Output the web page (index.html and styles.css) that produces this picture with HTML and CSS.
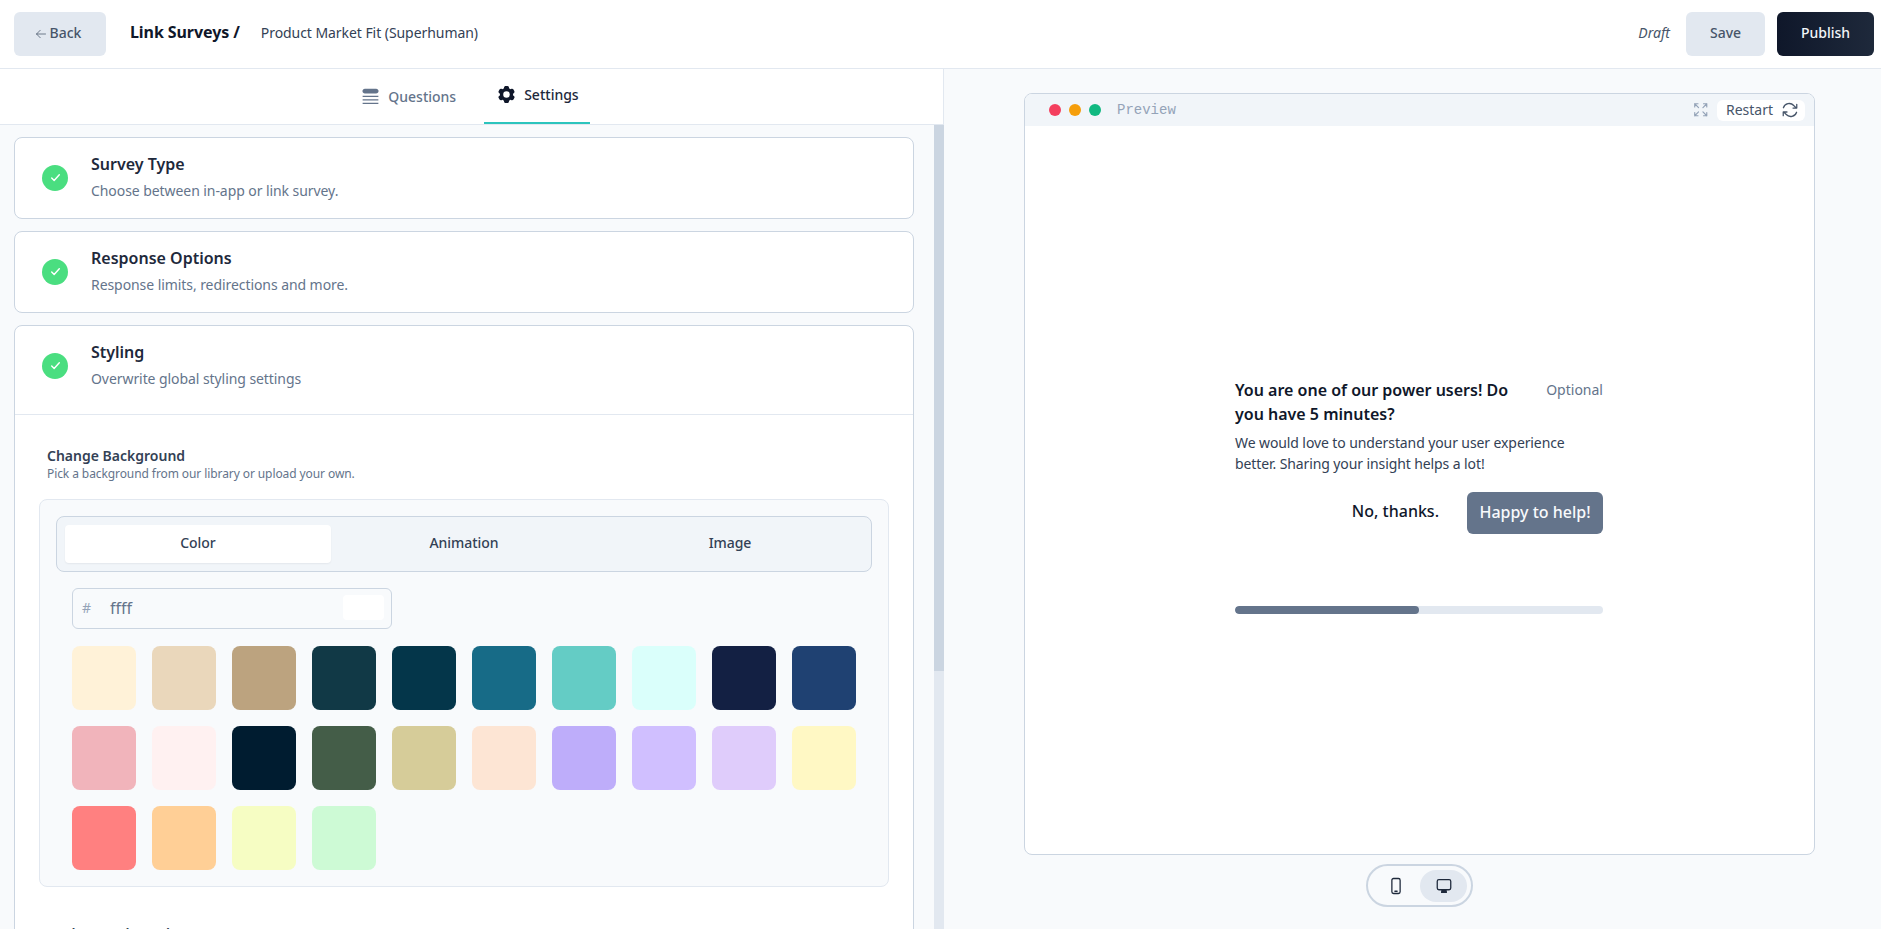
FILE: index.html
```html
<!DOCTYPE html>
<html lang="en">
<head>
<meta charset="utf-8">
<title>Link Surveys</title>
<link rel="stylesheet" href="styles.css">
</head>
<body>
<header class="topbar">
  <div class="topbar-left">
    <button class="btn btn-soft btn-back">
      <svg class="back-arrow" viewBox="0 0 24 24" fill="none" stroke="currentColor" stroke-width="1.5" stroke-linecap="round" stroke-linejoin="round"><path d="M10.5 19.5 3 12l7.5-7.5M3 12h18"/></svg>
      Back
    </button>
    <span class="crumb">Link Surveys /</span>
    <span class="survey-name">Product Market Fit (Superhuman)</span>
  </div>
  <div class="topbar-right">
    <span class="status">Draft</span>
    <button class="btn btn-soft btn-save">Save</button>
    <button class="btn btn-dark">Publish</button>
  </div>
</header>
<main class="workspace">
  <section class="editor">
    <nav class="tabs">
      <a class="tab">
        <svg class="tab-icon" viewBox="0 0 24 24" fill="currentColor"><path d="M5.6 3h12.8C20 3 21.2 4.2 21.2 5.8S20 8.6 18.4 8.6H5.6C4 8.6 2.8 7.4 2.8 5.8S4 3 5.6 3Z"/><path d="M3 11h18v1.6H3zM3 15h18v1.6H3zM3 19h18v1.6H3z"/></svg>
        Questions
      </a>
      <a class="tab tab-active">
        <svg class="tab-icon" viewBox="0 0 24 24" fill="currentColor"><path fill-rule="evenodd" d="M11.08 2.25c-.92 0-1.7.66-1.85 1.57l-.18 1.07c-.02.12-.11.26-.3.35-.34.17-.67.36-.98.57-.17.12-.33.13-.45.08l-1.01-.38a1.88 1.88 0 0 0-2.28.82l-.92 1.6a1.88 1.88 0 0 0 .43 2.38l.83.69c.1.08.17.22.15.43a8 8 0 0 0 0 1.14c.02.2-.05.35-.15.43l-.83.69a1.88 1.88 0 0 0-.43 2.38l.92 1.6c.46.79 1.42 1.14 2.28.82l1.01-.38c.12-.05.28-.04.45.08.31.21.64.4.98.57.19.09.28.23.3.35l.18 1.07c.15.91.93 1.57 1.85 1.57h1.84c.92 0 1.7-.66 1.85-1.57l.18-1.07c.02-.12.11-.26.3-.35.34-.17.67-.36.98-.57.17-.12.33-.13.45-.08l1.01.38c.86.32 1.82-.03 2.28-.82l.92-1.6a1.88 1.88 0 0 0-.43-2.38l-.83-.69c-.1-.08-.17-.22-.15-.43a8 8 0 0 0 0-1.14c-.02-.2.05-.35.15-.43l.83-.69c.71-.58.9-1.59.43-2.38l-.92-1.6a1.88 1.88 0 0 0-2.28-.82l-1.01.38c-.12.05-.28.04-.45-.08a8 8 0 0 0-.98-.57c-.19-.09-.28-.23-.3-.35l-.18-1.07a1.88 1.88 0 0 0-1.85-1.57h-1.84ZM12 15.75a3.75 3.75 0 1 0 0-7.5 3.75 3.75 0 0 0 0 7.5Z" clip-rule="evenodd"/></svg>
        Settings
      </a>
    </nav>
    <div class="editor-body">
      <div class="scroller">
        <article class="card">
          <div class="card-head">
            <span class="check"><svg viewBox="0 0 24 24" fill="none" stroke="currentColor" stroke-width="2.6" stroke-linecap="round" stroke-linejoin="round"><path d="m5 13 4.5 4.5L19 7"/></svg></span>
            <div>
              <h3 class="card-title">Survey Type</h3>
              <p class="card-sub">Choose between in-app or link survey.</p>
            </div>
          </div>
        </article>
        <article class="card">
          <div class="card-head">
            <span class="check"><svg viewBox="0 0 24 24" fill="none" stroke="currentColor" stroke-width="2.6" stroke-linecap="round" stroke-linejoin="round"><path d="m5 13 4.5 4.5L19 7"/></svg></span>
            <div>
              <h3 class="card-title">Response Options</h3>
              <p class="card-sub">Response limits, redirections and more.</p>
            </div>
          </div>
        </article>
        <article class="card">
          <div class="card-head card-head-open">
            <span class="check"><svg viewBox="0 0 24 24" fill="none" stroke="currentColor" stroke-width="2.6" stroke-linecap="round" stroke-linejoin="round"><path d="m5 13 4.5 4.5L19 7"/></svg></span>
            <div>
              <h3 class="card-title">Styling</h3>
              <p class="card-sub">Overwrite global styling settings</p>
            </div>
          </div>
          <div class="card-body">
            <h4 class="field-label">Change Background</h4>
            <p class="field-help">Pick a background from our library or upload your own.</p>
            <div class="bg-box">
              <div class="segmented">
                <span class="segment segment-active">Color</span>
                <span class="segment">Animation</span>
                <span class="segment">Image</span>
              </div>
              <div class="color-input">
                <span class="hash">#</span>
                <span class="hex">ffff</span>
                <span class="color-chip"></span>
              </div>
              <div class="swatches">
                <span class="swatch" style="background:#FFF2D8"></span>
                <span class="swatch" style="background:#EAD7BB"></span>
                <span class="swatch" style="background:#BCA37F"></span>
                <span class="swatch" style="background:#113946"></span>
                <span class="swatch" style="background:#04364A"></span>
                <span class="swatch" style="background:#176B87"></span>
                <span class="swatch" style="background:#64CCC5"></span>
                <span class="swatch" style="background:#DAFFFB"></span>
                <span class="swatch" style="background:#132043"></span>
                <span class="swatch" style="background:#1F4172"></span>
                <span class="swatch" style="background:#F1B4BB"></span>
                <span class="swatch" style="background:#FFF1F1"></span>
                <span class="swatch" style="background:#001C30"></span>
                <span class="swatch" style="background:#445D48"></span>
                <span class="swatch" style="background:#D6CC99"></span>
                <span class="swatch" style="background:#FDE5D4"></span>
                <span class="swatch" style="background:#BEADFA"></span>
                <span class="swatch" style="background:#D0BFFF"></span>
                <span class="swatch" style="background:#DFCCFB"></span>
                <span class="swatch" style="background:#FFF8C4"></span>
                <span class="swatch" style="background:#FF8080"></span>
                <span class="swatch" style="background:#FFCF96"></span>
                <span class="swatch" style="background:#F6FDC3"></span>
                <span class="swatch" style="background:#CDFAD5"></span>
              </div>
            </div>
            <h4 class="field-label field-label-next">Background Overlay</h4>
          </div>
        </article>
      </div>
      <div class="scrollbar"><div class="scrollbar-thumb"></div></div>
    </div>
  </section>
  <section class="preview">
    <div class="window">
      <div class="window-bar">
        <span class="dot dot-red"></span>
        <span class="dot dot-amber"></span>
        <span class="dot dot-green"></span>
        <span class="window-name">Preview</span>
        <svg class="expand" viewBox="0 0 24 24" fill="none" stroke="currentColor" stroke-width="1.6" stroke-linecap="round" stroke-linejoin="round"><path d="M3.75 8.25v-4.5h4.5M3.75 3.75 9 9M20.25 8.25v-4.5h-4.5M20.25 3.75 15 9M3.75 15.75v4.5h4.5M3.75 20.25 9 15M20.25 15.75v4.5h-4.5M20.25 20.25 15 15"/></svg>
        <span class="restart">
          Restart
          <svg class="restart-icon" viewBox="0 0 24 24" fill="none" stroke="currentColor" stroke-width="1.7" stroke-linecap="round" stroke-linejoin="round"><path d="M16.02 9.35h4.99V4.36M2.99 19.64v-4.99h4.99M3.2 9.02a8.25 8.25 0 0 1 13.8-3.08l3.18 3.18M20.8 14.98a8.25 8.25 0 0 1-13.8 3.08l-3.18-3.18"/></svg>
        </span>
      </div>
      <div class="window-body">
        <div class="question">
          <div class="question-head">
            <h2 class="question-title">You are one of our power users! Do you have 5 minutes?</h2>
            <span class="optional">Optional</span>
          </div>
          <p class="question-sub">We would love to understand your user experience better. Sharing your insight helps a lot!</p>
          <div class="question-actions">
            <span class="dismiss">No, thanks.</span>
            <span class="accept">Happy to help!</span>
          </div>
          <div class="progress"><div class="progress-fill"></div></div>
        </div>
      </div>
    </div>
    <div class="device-toggle">
      <span class="device">
        <svg viewBox="0 0 24 24" fill="none" stroke="currentColor" stroke-width="1.7" stroke-linecap="round" stroke-linejoin="round"><rect x="6.5" y="2" width="11" height="20" rx="2.2"/><path d="M10.5 19h3"/></svg>
      </span>
      <span class="device device-active">
        <svg viewBox="0 0 24 24" fill="none" stroke="currentColor" stroke-width="1.7" stroke-linecap="round" stroke-linejoin="round"><rect x="3" y="3.5" width="18" height="13.5" rx="2.2"/><path d="M9.5 17h5l.7 3.5H8.8z" fill="currentColor"/></svg>
      </span>
    </div>
  </section>
</main>
</body>
</html>
```
FILE: styles.css
```css
* { box-sizing: border-box; }
html, body { height: 100%; }
body {
  margin: 0;
  display: flex;
  flex-direction: column;
  overflow: hidden;
  background: #fff;
  color: #0f172a;
  font-family: "Noto Sans", "Liberation Sans", sans-serif;
  font-size: 14px;
}
h2, h3, h4, p { margin: 0; }

.topbar {
  flex: none;
  height: 69px;
  display: flex;
  align-items: center;
  justify-content: space-between;
  padding: 0 7px 1px 14px;
  border-bottom: 1px solid #e2e8f0;
  background: #fff;
}
.topbar-left, .topbar-right { display: flex; align-items: center; }
.btn {
  height: 44px;
  padding: 0 0 2px;
  border: 0;
  border-radius: 6px;
  font: 500 14px/20px "Noto Sans", sans-serif;
  display: inline-flex;
  align-items: center;
  justify-content: center;
}
.btn-soft { background: #e2e8f0; color: #475569; }
.btn-dark { background: #0f172a; color: #f1f5f9; width: 97px; margin-left: 12px; background-image: linear-gradient(90deg, #0f172a, #1e293b); }
.btn-back { width: 92px; gap: 3px; padding-right: 4px; }
.btn-save { width: 79px; }
.back-arrow { width: 12px; height: 12px; margin-top: 2px; }
.crumb { margin: 0 0 3px 24px; font-size: 16px; font-weight: 700; line-height: 24px; letter-spacing: -.08px; color: #0f172a; }
.survey-name { margin: 0 0 2px 21px; color: #334155; line-height: 20px; letter-spacing: -.06px; }
.status { margin: 0 16px 2px 0; font-style: italic; color: #475569; }

.workspace { flex: 1; min-height: 0; display: flex; }

.editor {
  flex: none;
  width: 944px;
  display: flex;
  flex-direction: column;
  min-height: 0;
}
.tabs {
  flex: none;
  height: 56px;
  display: flex;
  justify-content: center;
  padding-right: 7px;
  border-bottom: 1px solid #e2e8f0;
  border-right: 1px solid #e2e8f0;
  background: #fff;
}
.tab {
  display: flex;
  align-items: center;
  gap: 7px;
  height: 55px;
  padding: 0 14px;
  color: #64748b;
  font-weight: 500;
  margin-right: 14px;
}
.tab-active {
  margin-right: 0;
  padding: 0 11px 3px 12px;
  color: #1e293b;
  border-bottom: 2px solid #2cc4bd;
}
.tab-icon { width: 21px; height: 21px; flex: none; }
.tab-active .tab-icon { color: #0f172a; }

.editor-body { flex: 1; min-height: 0; display: flex; }
.scroller {
  flex: 1;
  min-width: 0;
  overflow: hidden;
  padding: 12px 20px 0 14px;
  background: #f8fafc;
}
.scrollbar { flex: none; width: 10px; background: #e2e8f0; }
.scrollbar-thumb { height: 546px; background: #cbd5e1; }

.card {
  margin-bottom: 12px;
  background: #fff;
  border: 1px solid #cbd5e1;
  border-radius: 8px;
}
.card-head {
  display: flex;
  align-items: center;
  gap: 23px;
  padding: 14px 27px 17px;
}
.card-head-open { padding-bottom: 25px; }
.check {
  flex: none;
  width: 26px;
  height: 26px;
  margin-top: 2px;
  border-radius: 50%;
  background: #4ade80;
  color: #fff;
  display: flex;
  align-items: center;
  justify-content: center;
}
.check svg { width: 13px; height: 13px; }
.card-title { font-size: 16px; line-height: 24px; font-weight: 600; color: #1e293b; }
.card-sub { margin-top: 5px; line-height: 20px; letter-spacing: -.07px; color: #64748b; }
.card-body { border-top: 1px solid #e2e8f0; padding: 31px 24px 24px; }
.field-label { padding-left: 8px; font-size: 14px; line-height: 20px; font-weight: 600; color: #334155; }
.field-help { padding-left: 8px; font-size: 12px; line-height: 16px; letter-spacing: -.09px; color: #64748b; }
.field-label-next { margin-top: 37px; }

.bg-box {
  margin-top: 17px;
  padding: 16px;
  background: #f8fafc;
  border: 1px solid #e2e8f0;
  border-radius: 8px;
}
.segmented {
  display: grid;
  grid-template-columns: repeat(3, 1fr);
  padding: 8px;
  background: #f1f5f9;
  border: 1px solid #cbd5e1;
  border-radius: 8px;
}
.segment { height: 38px; padding-bottom: 3px; display: flex; align-items: center; justify-content: center; font-weight: 500; letter-spacing: -.05px; color: #334155; border-radius: 4px; }
.segment-active { background: #fff; box-shadow: 0 1px 2px rgba(15, 23, 42, .06); }
.color-input {
  width: 320px;
  height: 41px;
  margin: 16px 0 17px 16px;
  display: flex;
  align-items: center;
  padding: 0 7px 2px 9px;
  background: #f8fafc;
  border: 1px solid #cbd5e1;
  border-radius: 6px;
}
.hash { width: 28px; color: #94a3b8; }
.hex { flex: 1; font-size: 16px; color: #64748b; }
.color-chip { width: 41px; height: 25px; background: #fff; border-radius: 4px; }
.swatches {
  margin-left: 16px;
  display: grid;
  grid-template-columns: repeat(10, 64px);
  grid-auto-rows: 64px;
  gap: 16px;
}
.swatch { border-radius: 8px; }

.preview {
  flex: 1;
  min-width: 0;
  display: flex;
  flex-direction: column;
  align-items: center;
  padding: 24px 66px 0 80px;
  background: #f8fafc;
}
.window {
  width: 100%;
  height: 762px;
  flex: none;
  display: flex;
  flex-direction: column;
  background: #fff;
  border: 1px solid #cbd5e1;
  border-radius: 8px;
  overflow: hidden;
}
.window-bar {
  flex: none;
  height: 32px;
  display: flex;
  align-items: center;
  padding: 0 9px 0 24px;
  background: #f1f5f9;
}
.dot { width: 12px; height: 12px; border-radius: 50%; margin-right: 8px; }
.dot-red { background: #f43f5e; }
.dot-amber { background: #f59e0b; }
.dot-green { background: #10b981; margin-right: 16px; }
.window-name { flex: 1; font-family: "Liberation Mono", monospace; font-size: 14px; color: #94a3b8; }
.expand { width: 17.5px; height: 17.5px; color: #94a3b8; margin-right: 7px; }
.restart {
  display: flex;
  align-items: center;
  gap: 8px;
  height: 21px;
  padding: 0 6px 0 9px;
  background: #fff;
  border-radius: 6px;
  color: #475569;
  line-height: 20px;
}
.restart-icon { width: 18px; height: 18px; }
.window-body {
  flex: 1;
  display: flex;
  flex-direction: column;
  align-items: center;
  padding-top: 252px;
}
.question { width: 368px; margin-right: 1px; }
.question-head { display: flex; align-items: flex-start; justify-content: space-between; }
.question-title { width: 290px; font-size: 16px; line-height: 24px; font-weight: 600; color: #0f172a; }
.optional { margin-top: 2px; line-height: 20px; color: #64748b; }
.question-sub { margin-top: 6px; line-height: 21px; letter-spacing: -.1px; color: #334155; }
.question-actions { margin-top: 18px; display: flex; align-items: center; justify-content: flex-end; }
.dismiss { margin: 0 28px 4px 0; font-size: 16px; font-weight: 500; color: #0f172a; }
.accept {
  width: 136px;
  height: 42px;
  padding-bottom: 2px;
  display: flex;
  align-items: center;
  justify-content: center;
  background: #64748b;
  border-radius: 6px;
  color: #f8fafc;
  font-size: 16px;
  font-weight: 500;
}
.progress { margin-top: 72px; height: 8px; border-radius: 4px; background: #e2e8f0; overflow: hidden; }
.progress-fill { width: 50%; height: 100%; border-radius: 4px; background: #64748b; }

.device-toggle {
  flex: none;
  margin-top: 9px;
  height: 43px;
  width: 107px;
  display: flex;
  align-items: center;
  justify-content: space-between;
  padding: 0 4px;
  border: 2px solid #cbd5e1;
  border-radius: 22px;
  background: #f8fafc;
}
.device { width: 47px; height: 32px; display: flex; align-items: center; justify-content: center; border-radius: 16px; color: #1e293b; }
.device svg { width: 18px; height: 18px; }
.device-active { background: #e2e8f0; }
```
